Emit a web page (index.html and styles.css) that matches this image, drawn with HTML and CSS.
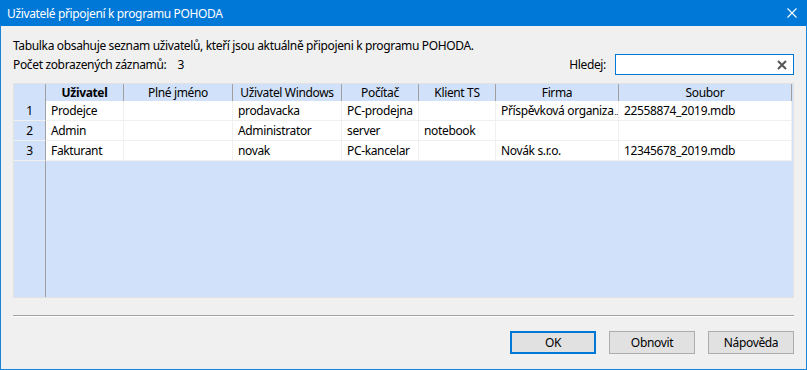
FILE: index.html
```html
<!DOCTYPE html>
<html lang="cs">
<head>
  <meta charset="UTF-8" />
  <title>Uživatelé připojení k programu POHODA</title>
  <link rel="stylesheet" href="styles.css">
</head>
<body>
  <div class="window">
    <div class="titlebar">
      <span class="title">Uživatelé připojení k programu POHODA</span>
      <svg class="close" width="10" height="10" viewBox="0 0 10 10">
        <path d="M0.5 0.5 L9.5 9.5 M9.5 0.5 L0.5 9.5" stroke="#fff" stroke-width="1.1" fill="none" />
      </svg>
    </div>

    <div class="content">
      <p class="info">Tabulka obsahuje seznam uživatelů, kteří jsou aktuálně připojeni k programu POHODA.</p>

      <div class="toolbar">
        <span class="count">Počet zobrazených záznamů:<span class="count-value">3</span></span>
        <label class="search">
          <span>Hledej:</span>
          <span class="search-box">
            <svg width="10" height="10" viewBox="0 0 10 10">
              <path d="M1 1 L9 9 M9 1 L1 9" stroke="#555" stroke-width="2" fill="none" />
            </svg>
          </span>
        </label>
      </div>

      <!-- seznam připojených uživatelů -->
      <div class="grid">
        <div class="gh"></div>
        <div class="gh bold">Uživatel</div>
        <div class="gh">Plné jméno</div>
        <div class="gh">Uživatel Windows</div>
        <div class="gh">Počítač</div>
        <div class="gh">Klient TS</div>
        <div class="gh">Firma</div>
        <div class="gh">Soubor</div>

        <div class="rn">1</div>
        <div class="gc">Prodejce</div>
        <div class="gc"></div>
        <div class="gc">prodavacka</div>
        <div class="gc">PC-prodejna</div>
        <div class="gc"></div>
        <div class="gc">Příspěvková organiza<span class="dots">…</span></div>
        <div class="gc">22558874_2019.mdb</div>

        <div class="rn">2</div>
        <div class="gc">Admin</div>
        <div class="gc"></div>
        <div class="gc">Administrator</div>
        <div class="gc">server</div>
        <div class="gc">notebook</div>
        <div class="gc"></div>
        <div class="gc"></div>

        <div class="rn">3</div>
        <div class="gc">Fakturant</div>
        <div class="gc"></div>
        <div class="gc">novak</div>
        <div class="gc">PC-kancelar</div>
        <div class="gc"></div>
        <div class="gc">Novák s.r.o.</div>
        <div class="gc">12345678_2019.mdb</div>
      </div>

      <div class="separator"></div>

      <div class="buttons">
        <button class="btn default">OK</button>
        <button class="btn">Obnovit</button>
        <button class="btn">Nápověda</button>
      </div>
    </div>
  </div>
</body>
</html>
```

FILE: styles.css
```css
html, body {
  margin: 0;
  padding: 0;
  background: #f0f0f0;
  font-family: "Noto Sans", "Liberation Sans", sans-serif;
  font-size: 12px;
  letter-spacing: -0.35px;
  color: #000;
}

.window {
  width: 807px;
  height: 370px;
  box-sizing: border-box;
  border: 1px solid #1883d7;
  border-top: none;
  display: flex;
  flex-direction: column;
  background: #f0f0f0;
}

.titlebar {
  height: 26px;
  margin: 0 -1px;
  background: #0078d7;
  color: #fff;
  display: flex;
  align-items: center;
  justify-content: space-between;
  padding: 0 10px 0 7px;
}

.title {
  font-size: 12px;
}

.content {
  padding: 12px 12px 0 12px;
}

.info {
  margin: 0;
  line-height: 16px;
}

.toolbar {
  display: flex;
  align-items: center;
  justify-content: space-between;
  height: 21px;
}

.count-value {
  margin-left: 11px;
}

.search {
  display: flex;
  align-items: center;
  gap: 9px;
}

.search-box {
  width: 179px;
  height: 21px;
  box-sizing: border-box;
  border: 1px solid #0078d7;
  background: #fff;
  display: flex;
  align-items: center;
  justify-content: flex-end;
  padding-right: 6px;
}

.grid {
  margin-top: 8px;
  width: 781px;
  height: 215px;
  box-sizing: border-box;
  border: 1px solid #e2e2e2;
  display: grid;
  grid-template-columns: 32px 78px 109px 109px 77px 77px 123px 173px;
  grid-template-rows: 17px 20px 20px 20px;
  align-content: start;
  background: linear-gradient(to right, transparent 31px, #a0a0a0 31px, #a0a0a0 32px, transparent 32px), #d0e1f9;
}

.gh, .gc, .rn {
  box-sizing: border-box;
  white-space: nowrap;
  overflow: hidden;
  line-height: 19px;
}

.gh {
  background: #d0e1f9;
  border-right: 1px solid #a0a0a0;
  text-align: center;
  line-height: 17px;
}

.bold {
  font-weight: bold;
}

.rn {
  background: #d0e1f9;
  border-right: 1px solid #a0a0a0;
  border-bottom: 1px solid #f0f0f0;
  text-align: center;
}

.gc {
  background: #fff;
  border-right: 1px solid #f0f0f0;
  border-bottom: 1px solid #f0f0f0;
  padding-left: 5px;
}

.dots {
  font-size: 7px;
  letter-spacing: -1px;
  margin-left: 1px;
}

.separator {
  margin-top: 17px;
  width: 781px;
  border-top: 1px solid #a0a0a0;
  border-bottom: 1px solid #fff;
}

.buttons {
  display: flex;
  justify-content: flex-end;
  gap: 13px;
  margin-top: 14px;
  width: 781px;
}

.btn {
  width: 86px;
  height: 23px;
  box-sizing: border-box;
  background: #e1e1e1;
  border: 1px solid #adadad;
  font-family: inherit;
  font-size: 12px;
  letter-spacing: -0.35px;
  color: #000;
  padding: 0;
}

.btn.default {
  border: 2px solid #0078d7;
}
```
